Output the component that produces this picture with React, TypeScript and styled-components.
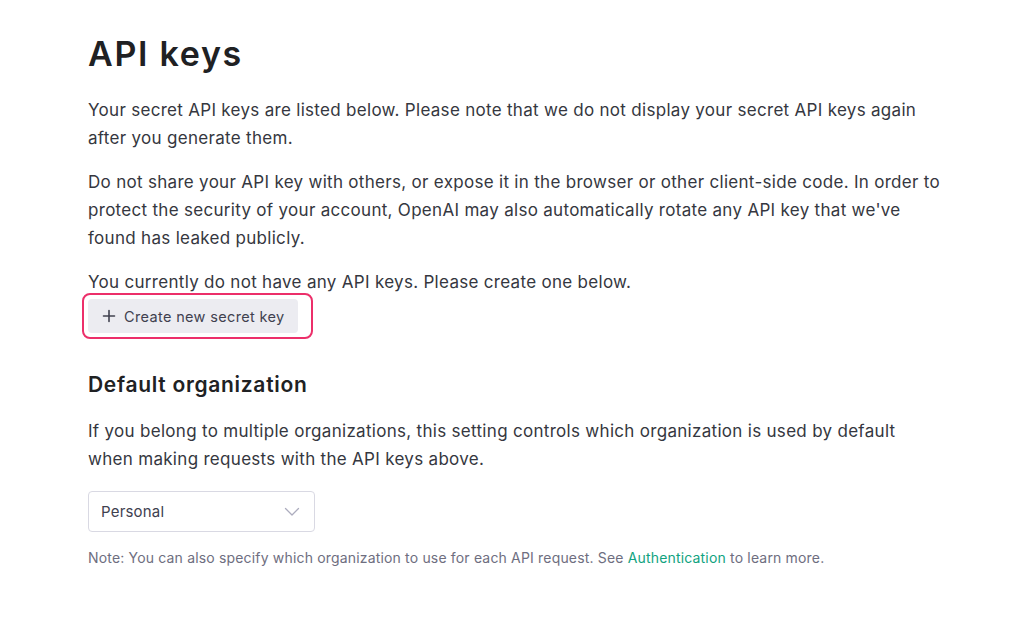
import React from "react";
import styled, { createGlobalStyle } from "styled-components";

const Global = createGlobalStyle`
  body { margin: 0; background: #fff; font-family: Inter, "Noto Sans", sans-serif; color: #353740; }
`;

const Page = styled.div`
  padding: 30px 0 0 88px;
  width: 854px;
`;

const Title = styled.h1`
  margin: 0 0 18px;
  font-size: 34px;
  font-weight: 600;
  color: #202123;
  letter-spacing: 1.7px;
  line-height: 48px;
`;

const Para = styled.p<{ $gap?: number }>`
  margin: 0 0 ${(p) => p.$gap ?? 16}px;
  font-size: 17px;
  line-height: 28px;
  letter-spacing: 0.3px;
  color: #353740;
`;

const HighlightBox = styled.div`
  display: inline-flex;
  margin: -3px 0 0 -6px;
  padding: 4px 13px 4px 4px;
  border: 2px solid #ec2f6a;
  border-radius: 8px;
`;

const Button = styled.button`
  display: flex;
  align-items: center;
  gap: 8px;
  height: 34px;
  padding: 0 13px 0 14px;
  border: none;
  border-radius: 4px;
  background: #ececf1;
  color: #40414f;
  font-family: inherit;
  font-size: 14.5px;
  letter-spacing: 0.35px;
`;

const Heading = styled.h2`
  margin: 32px 0 18px;
  font-size: 21px;
  font-weight: 600;
  letter-spacing: 0.7px;
  color: #202123;
  line-height: 28px;
`;

const Select = styled.div`
  box-sizing: border-box;
  width: 227px;
  height: 41px;
  border: 1px solid #d9d9e3;
  border-radius: 4px;
  display: flex;
  align-items: center;
  justify-content: space-between;
  padding: 0 14px 0 12px;
  font-size: 15px;
  letter-spacing: 0.2px;
  color: #40414f;
  margin-top: 18px;
`;

const Note = styled.p`
  margin: 17px 0 0;
  font-size: 14px;
  letter-spacing: 0.17px;
  color: #6e6e80;
`;

const Link = styled.a`
  color: #10a37f;
  text-decoration: none;
`;

export default function App() {
  return (
    <>
      <Global />
      <Page>
        <Title>API keys</Title>
        <Para>
          Your secret API keys are listed below. Please note that we do not display your secret API keys again
          after you generate them.
        </Para>
        <Para>
          Do not share your API key with others, or expose it in the browser or other client-side code. In order to
          protect the security of your account, OpenAI may also automatically rotate any API key that we've found has
          leaked publicly.
        </Para>
        <Para $gap={0}>You currently do not have any API keys. Please create one below.</Para>
        <HighlightBox>
          <Button>
            <svg width="14" height="14" viewBox="0 0 14 14" fill="none" stroke="#40414f" strokeWidth="1.6" strokeLinecap="round">
              <path d="M7 1.5v11M1.5 7h11" />
            </svg>
            Create new secret key
          </Button>
        </HighlightBox>
        <Heading>Default organization</Heading>
        <Para>
          If you belong to multiple organizations, this setting controls which organization is used by default when
          making requests with the API keys above.
        </Para>
        <Select>
          Personal
          <svg width="16" height="10" viewBox="0 0 16 10" fill="none" stroke="#acacbe" strokeWidth="1.3" strokeLinecap="round" strokeLinejoin="round">
            <path d="M1.5 1.5l6.5 6.5 6.5-6.5" />
          </svg>
        </Select>
        <Note>
          Note: You can also specify which organization to use for each API request. See{" "}
          <Link href="#">Authentication</Link> to learn more.
        </Note>
      </Page>
    </>
  );
}
